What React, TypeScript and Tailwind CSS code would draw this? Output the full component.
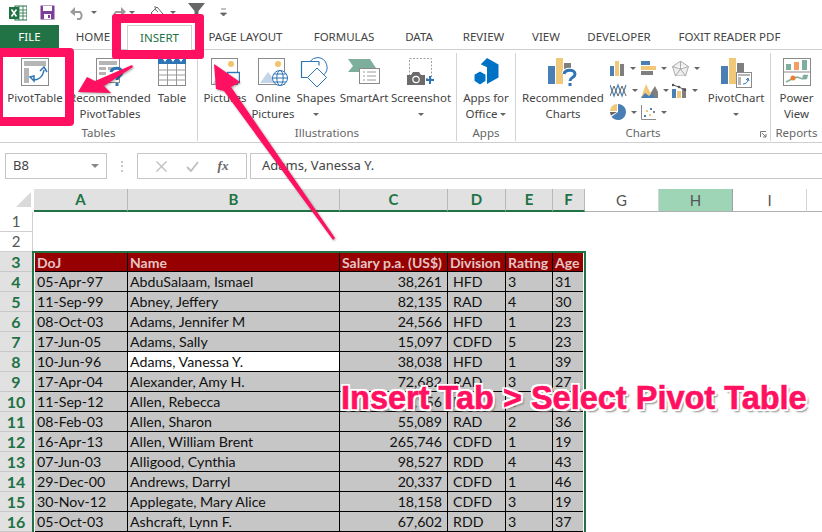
import React from "react";

const ribbonFont = "font-['Noto_Sans',sans-serif]";
const sheetFont = "font-['Lato',sans-serif]";

const tabs: [string, string][] = [
  ["HOME", "w-[68px]"],
  ["INSERT", "w-[65px]"],
  ["PAGE LAYOUT", "w-[107px]"],
  ["FORMULAS", "w-[90px]"],
  ["DATA", "w-[60px]"],
  ["REVIEW", "w-[69px]"],
  ["VIEW", "w-[56px]"],
  ["DEVELOPER", "w-[90px]"],
  ["FOXIT READER PDF", "w-[131px]"],
];

const rows = [
  ["05-Apr-97", "AbduSalaam, Ismael", "38,261", "HFD", "3", "31"],
  ["11-Sep-99", "Abney, Jeffery", "82,135", "RAD", "4", "30"],
  ["08-Oct-03", "Adams, Jennifer M", "24,566", "HFD", "1", "23"],
  ["17-Jun-05", "Adams, Sally", "15,097", "CDFD", "5", "23"],
  ["10-Jun-96", "Adams, Vanessa Y.", "38,038", "HFD", "1", "39"],
  ["17-Apr-04", "Alexander, Amy H.", "72,682", "RAD", "3", "27"],
  ["11-Sep-12", "Allen, Rebecca", "64,156", "RAD", "2", "33"],
  ["08-Feb-03", "Allen, Sharon", "55,089", "RAD", "2", "36"],
  ["16-Apr-13", "Allen, William Brent", "265,746", "CDFD", "1", "19"],
  ["07-Jun-03", "Alligood, Cynthia", "98,527", "RDD", "4", "43"],
  ["29-Dec-00", "Andrews, Darryl", "20,337", "CDFD", "1", "46"],
  ["30-Nov-12", "Applegate, Mary Alice", "18,158", "CDFD", "3", "19"],
  ["05-Oct-03", "Ashcraft, Lynn F.", "67,602", "RDD", "3", "37"],
];

const Caret = () => <span className="w-0 h-0 border-x-[3px] border-x-transparent border-t-[3px] border-t-[#666] inline-block" />;

const RibbonButton = ({ w, icon, lines, caret }: { w: string; icon: React.ReactNode; lines: string[]; caret?: boolean }) => (
  <div className={`${w} shrink-0 flex flex-col items-center`}>
    <div className="h-[36px] flex items-center justify-center">{icon}</div>
    {lines.map((l) => (
      <div key={l} className="leading-[16px] whitespace-nowrap">{l}</div>
    ))}
    {caret && <div className="h-[16px] flex items-center"><Caret /></div>}
  </div>
);

const Group = ({ w, label, children }: { w: string; label: string; children: React.ReactNode }) => (
  <div className={`${w} shrink-0 relative flex flex-col h-[88px] mt-[3px] border-r border-[#d4d4d4]`}>
    <div className="flex h-[73px] pt-[1px]">{children}</div>
    <div className="text-center leading-[16px] text-[#666]">{label}</div>
  </div>
);

const PivotIcon = () => (
  <svg width="30" height="30" viewBox="0 0 30 30">
    <rect x="1.5" y="1.5" width="27" height="27" fill="#fff" stroke="#8a8a8a" />
    <rect x="4" y="4" width="22" height="5" fill="#b5b5b5" />
    <rect x="4" y="11" width="5" height="15" fill="#b5b5b5" />
    <path d="M13 23c5 0 10-3 11-10" fill="none" stroke="#2e75b6" strokeWidth="1.5" />
    <path d="M20 14l4-4 3 5M10 20l4-1v5z" fill="none" stroke="#2e75b6" strokeWidth="1.5" />
  </svg>
);

const RecPivotIcon = () => (
  <svg width="30" height="30" viewBox="0 0 30 30">
    <rect x="1.5" y="1.5" width="23" height="24" fill="#fff" stroke="#8a8a8a" />
    <rect x="4" y="4" width="18" height="4" fill="#b5b5b5" />
    <rect x="4" y="10" width="7" height="3" fill="#b5b5b5" />
    <rect x="4" y="15" width="7" height="3" fill="#b5b5b5" />
    <rect x="13" y="10" width="7" height="3" fill="#b5b5b5" />
    <path d="M16 15c1-5 11-5 11 0 0 4-5 4-5 8M22 26v3" fill="none" stroke="#2e75b6" strokeWidth="3" />
  </svg>
);

const TableIcon = () => (
  <svg width="30" height="30" viewBox="0 0 30 30">
    <rect x="1.5" y="3.5" width="27" height="25" fill="#fff" stroke="#8a8a8a" />
    <rect x="1" y="1" width="28" height="6" fill="#2e75b6" />
    <path d="M1 13h28M1 18h28M1 23h28M10.5 7v21M19.5 7v21" stroke="#9a9a9a" />
    <path d="M6 2l2 3 2-3zM14 2l2 3 2-3zM22 2l2 3 2-3z" fill="#fff" />
  </svg>
);

const PicturesIcon = () => (
  <svg width="30" height="30" viewBox="0 0 30 30">
    <rect x="1.5" y="1.5" width="26" height="26" fill="#fff" stroke="#8a8a8a" />
    <circle cx="21" cy="7" r="3" fill="#f0c36d" />
    <path d="M3 26l9-11 7 8 0 4H3z" fill="#c5d5e8" />
    <rect x="17.5" y="15.5" width="12" height="10" fill="#fff" stroke="#2e75b6" strokeWidth="1.4" />
  </svg>
);

const OnlineIcon = () => (
  <svg width="32" height="30" viewBox="0 0 32 30">
    <rect x="1.5" y="1.5" width="26" height="26" fill="#fff" stroke="#8a8a8a" />
    <circle cx="21" cy="7" r="3" fill="#f0c36d" />
    <path d="M3 26l8-11 9 11z" fill="#c5d5e8" />
    <circle cx="23" cy="21" r="7.5" fill="#fff" stroke="#2e75b6" />
    <ellipse cx="23" cy="21" rx="3.2" ry="7.5" fill="none" stroke="#2e75b6" />
    <path d="M15.5 21h15M17 17h12M17 25h12" stroke="#2e75b6" />
  </svg>
);

const ShapesIcon = () => (
  <svg width="32" height="32" viewBox="0 0 32 32">
    <path d="M18 1.5a10 10 0 0 1 5 18" fill="none" stroke="#2e75b6" />
    <path d="M18 1.5a10 10 0 0 0-8 4" fill="none" stroke="#2e75b6" />
    <path d="M19 5.5H1.5v16h6" fill="none" stroke="#2e75b6" strokeWidth="1.2" />
    <path d="M19 5.5v4" stroke="#2e75b6" strokeWidth="1.2" />
    <path d="M17 12l9.5 9.5L17 31l-9.5-9.5z" fill="#fff" stroke="#2e75b6" />
  </svg>
);

const SmartArtIcon = () => (
  <svg width="32" height="28" viewBox="0 0 32 28">
    <path d="M0 1h22l6 9-4 4H0l5-6z" fill="#7daf9c" />
    <rect x="11.5" y="10.5" width="20" height="15" fill="#fff" stroke="#8a8a8a" />
    <path d="M15 14h2M19 14h9M15 18h2M19 18h9M15 22h2M19 22h9" stroke="#9a9a9a" />
  </svg>
);

const ScreenshotIcon = () => (
  <svg width="30" height="30" viewBox="0 0 30 30">
    <rect x="3.5" y="1.5" width="22" height="20" fill="none" stroke="#a0a0a0" strokeDasharray="2 1.5" />
    <path d="M1 18h4l2-3h6l2 3h4v10H1z" fill="#6b6b6b" />
    <circle cx="10" cy="22.5" r="3.2" fill="#6b6b6b" stroke="#fff" strokeWidth="1.2" />
    <path d="M24 19v8M20 23h8" stroke="#2e75b6" strokeWidth="2" />
  </svg>
);

const AppsIcon = () => (
  <svg width="28" height="30" viewBox="0 0 28 30">
    <path d="M15 1l11.5 6.5v13L15 27V10L9 7z" fill="#0072c6" />
    <path d="M9 7.5L15 4l6 4v14h-6V10z" fill="#0072c6" />
    <path d="M8 14l6 3.5v6.5L8 28l-6-4v-6.500z" fill="#0072c6" stroke="#fff" />
  </svg>
);

const RecChartsIcon = () => (
  <svg width="30" height="30" viewBox="0 0 30 30">
    <rect x="0" y="9" width="7" height="18" fill="#4a7fb5" />
    <rect x="8" y="1" width="7" height="26" fill="#f0c878" />
    <rect x="16" y="6" width="7" height="6" fill="#7f7f7f" />
    <path d="M16 17c1-5 11-5 11 0 0 4-5 3-5 7M22 26v3" fill="none" stroke="#fff" strokeWidth="5" />
    <path d="M16 17c1-5 11-5 11 0 0 4-5 3-5 7M22 26v3" fill="none" stroke="#2e75b6" strokeWidth="3" />
  </svg>
);

const PivotChartIcon = () => (
  <svg width="32" height="32" viewBox="0 0 32 32">
    <rect x="1" y="10" width="7" height="18" fill="#4a7fb5" />
    <rect x="9" y="2" width="7" height="26" fill="#f0c878" />
    <rect x="17" y="7" width="7" height="10" fill="#7f7f7f" />
    <rect x="16.5" y="16.5" width="15" height="15" fill="#fff" stroke="#8a8a8a" />
    <rect x="18" y="18" width="12" height="2" fill="#b5b5b5" />
    <rect x="18" y="21" width="3" height="8" fill="#b5b5b5" />
    <path d="M23 28c3 0 5-2 5-5M26 24l2-2 1 3" fill="none" stroke="#2e75b6" />
  </svg>
);

const PowerViewIcon = () => (
  <svg width="28" height="28" viewBox="0 0 28 28">
    <rect x="0.5" y="0.5" width="27" height="27" fill="#fff" stroke="#8a8a8a" />
    <path d="M0 14h28" stroke="#8a8a8a" />
    <rect x="3" y="6" width="5" height="6" fill="#7daf9c" />
    <rect x="11" y="4" width="5" height="8" fill="#ed7d31" opacity="0.75" />
    <rect x="19" y="2" width="5" height="10" fill="#7daf9c" />
    <path d="M3 24l6-3 5-2 6 2 5-4" fill="none" stroke="#7daf9c" strokeWidth="1.5" />
    <circle cx="10" cy="20" r="2.5" fill="#ed7d31" />
    <circle cx="22" cy="19" r="2.5" fill="#7daf9c" />
  </svg>
);

const miniCharts = [
  <svg key="bar" width="15" height="15" viewBox="0 0 15 15"><rect x="0" y="5" width="4" height="10" fill="#4a7fb5" /><rect x="5" y="0" width="4" height="15" fill="#f0c878" /><rect x="10" y="3" width="4" height="12" fill="#7f7f7f" /></svg>,
  <svg key="hbar" width="15" height="15" viewBox="0 0 15 15"><rect x="0" y="0" width="9" height="4" fill="#4a7fb5" /><rect x="0" y="5" width="15" height="4" fill="#f0c878" /><rect x="0" y="10" width="12" height="4" fill="#7f7f7f" /></svg>,
  <svg key="radar" width="17" height="15" viewBox="0 0 17 15"><path d="M8.500 0l8 5.500-3 9.500h-10l-3-9.500zM8.500 0v8M.5 5.500l8 2.500 8-2.500M3.500 15l5-7 5 7" fill="#eee" stroke="#999" strokeWidth=".8" /></svg>,
  <svg key="line" width="17" height="15" viewBox="0 0 17 15"><path d="M0 2l4 11 4-11 4 11 4-11" fill="none" stroke="#4a7fb5" strokeWidth="1.200" /><path d="M0 13l4-10 4 10 4-10 4 10" fill="none" stroke="#666" /></svg>,
  <svg key="area" width="17" height="15" viewBox="0 0 17 15"><path d="M0 15l5-8 4 4 5-8 3 6v6z" fill="#7f7f7f" /><path d="M0 15l5-14 5 10v4z" fill="#f0c878" /><path d="M0 15l4-5 4 3 3-3 3 5z" fill="#4a7fb5" /></svg>,
  <svg key="combo" width="15" height="15" viewBox="0 0 15 15"><rect x="0" y="6" width="4" height="9" fill="#4a7fb5" /><rect x="5" y="8" width="4" height="7" fill="#f0c878" /><rect x="10" y="5" width="4" height="10" fill="#7f7f7f" /><path d="M1 2l6 2 6 3" fill="none" stroke="#555" /><circle cx="1" cy="2" r="1.300" fill="#555" /><circle cx="7" cy="4" r="1.300" fill="#555" /><circle cx="13" cy="7" r="1.300" fill="#555" /></svg>,
  <svg key="pie" width="16" height="16" viewBox="0 0 16 16"><path d="M8 8L8 0a8 8 0 1 1-6.500 12.700z" fill="#4a7fb5" /><path d="M7 7V0A7 7 0 0 0 0 7z" fill="#f0c878" /><path d="M7 8H0a7 7 0 0 0 1 3.500z" fill="#666" /></svg>,
  <svg key="scatter" width="15" height="15" viewBox="0 0 15 15"><path d="M.5 0v14.500H15" fill="none" stroke="#8a8a8a" /><rect x="3" y="10" width="2" height="2" fill="#4a7fb5" /><rect x="5" y="5" width="2" height="2" fill="#f0c878" /><rect x="8" y="9" width="2" height="2" fill="#f0c878" /><rect x="9" y="3" width="2" height="2" fill="#4a7fb5" /><rect x="12" y="6" width="2" height="2" fill="#7f7f7f" /></svg>,
];

const cols = ["w-[93px]", "w-[212px]", "w-[108px]", "w-[58px]", "w-[47px]", "w-[30px]"];
const heads = ["DoJ", "Name", "Salary p.a. (US$)", "Division", "Rating", "Age"];

const App = () => {
  return (
    <div className={`relative w-[822px] h-[532px] overflow-hidden bg-white text-[11.5px] text-[#444] ${ribbonFont}`}>
      {/* quick access */}
      <div className="h-[25px] flex items-center">
        <svg className="ml-[9px]" width="18" height="16" viewBox="0 0 18 16">
          <rect x="6" y="1" width="12" height="14" fill="#fff" stroke="#1f7244" />
          <path d="M10 1v14M14 1v14M6 5h12M6 8h12M6 11h12" stroke="#1f7244" strokeWidth=".8" />
          <rect x="0" y="2" width="10" height="12" fill="#1f7244" />
          <path d="M2.500 4.500l5 7M7.500 4.500l-5 7" stroke="#fff" strokeWidth="1.600" />
        </svg>
        <svg className="ml-[13px]" width="15" height="15" viewBox="0 0 15 15">
          <rect x="0.500" y="0.500" width="14" height="14" fill="#7e3f98" />
          <rect x="3" y="1" width="9" height="5" fill="#fff" />
          <rect x="4" y="9" width="7" height="5" fill="#fff" />
          <rect x="8" y="10" width="2" height="3" fill="#7e3f98" />
        </svg>
        <svg className="ml-[15px]" width="16" height="14" viewBox="0 0 16 14">
          <path d="M4 6h6a4.500 4.500 0 0 1 0 7H7" fill="none" stroke="#9a9a9a" strokeWidth="2" />
          <path d="M0 6l5-5v9z" fill="#9a9a9a" />
        </svg>
        <span className="ml-[5px] flex"><Caret /></span>
        <svg className="ml-[13px]" width="16" height="14" viewBox="0 0 16 14">
          <path d="M12 6H6a4.500 4.500 0 0 0 0 7h3" fill="none" stroke="#9a9a9a" strokeWidth="2" />
          <path d="M16 6l-5-5v9z" fill="#9a9a9a" />
        </svg>
        <span className="ml-[3px] flex"><Caret /></span>
        <svg className="ml-[15px]" width="16" height="16" viewBox="0 0 16 16">
          <path d="M1 8l6-6 6 7-5 5z" fill="#fff" stroke="#666" />
          <path d="M5 1c0 3 1 5 3 6" fill="none" stroke="#666" />
          <path d="M14 10c1 2 2 3 0 4-2-1-1-2 0-4z" fill="#666" />
        </svg>
        <span className="ml-[4px] flex"><Caret /></span>
        <svg className="ml-[12px] -mt-[6px]" width="17" height="14" viewBox="0 0 17 14">
          <path d="M0 0h17l-6.500 8v6h-4V8z" fill="#666" />
        </svg>
        <svg className="ml-[14px]" width="9" height="9" viewBox="0 0 9 9">
          <path d="M2 1h5M1.500 5h6l-3 3z" fill="#666" stroke="#666" strokeWidth=".8" />
        </svg>
      </div>

      {/* tabs */}
      <div className="h-[25px] flex border-b border-[#cfcfcf]">
        <div className="w-[59px] h-[24px] bg-[#217346] text-white flex items-center justify-center">FILE</div>
        {tabs.map(([t, w]) =>
          t === "INSERT" ? (
            <div key={t} className={`${w} h-[25px] bg-white border-x border-t border-[#cfcfcf] text-[#217346] flex items-center justify-center`}>{t}</div>
          ) : (
            <div key={t} className={`${w} flex items-center justify-center whitespace-nowrap`}>{t}</div>
          ),
        )}
      </div>

      {/* ribbon */}
      <div className="h-[93px] flex border-b border-[#cfcfcf]">
        <Group w="w-[198px]" label="Tables">
          <RibbonButton w="w-[70px]" icon={<PivotIcon />} lines={["PivotTable"]} />
          <RibbonButton w="w-[80px]" icon={<RecPivotIcon />} lines={["Recommended", "PivotTables"]} />
          <RibbonButton w="w-[44px]" icon={<TableIcon />} lines={["Table"]} />
        </Group>
        <Group w="w-[259px]" label="Illustrations">
          <RibbonButton w="w-[54px]" icon={<PicturesIcon />} lines={["Pictures"]} />
          <RibbonButton w="w-[42px]" icon={<OnlineIcon />} lines={["Online", "Pictures"]} />
          <RibbonButton w="w-[44px]" icon={<ShapesIcon />} lines={["Shapes"]} caret />
          <RibbonButton w="w-[52px]" icon={<SmartArtIcon />} lines={["SmartArt"]} />
          <RibbonButton w="w-[62px]" icon={<ScreenshotIcon />} lines={["Screenshot"]} caret />
        </Group>
        <Group w="w-[59px]" label="Apps">
          <div className="w-[58px] flex flex-col items-center">
            <div className="h-[36px] flex items-center"><AppsIcon /></div>
            <div className="leading-[16px]">Apps for</div>
            <div className="leading-[16px] flex items-center gap-[3px]">Office <Caret /></div>
          </div>
        </Group>
        <Group w="w-[255px]" label="Charts">
          <RibbonButton w="w-[94px]" icon={<RecChartsIcon />} lines={["Recommended", "Charts"]} />
          <div className="w-[93px] shrink-0 grid grid-cols-3 auto-rows-[22px] pt-[3px]">
            {miniCharts.map((c, i) => (
              <div key={i} className="flex items-center gap-[5px]">{c}<Caret /></div>
            ))}
          </div>
          <RibbonButton w="w-[66px]" icon={<PivotChartIcon />} lines={["PivotChart"]} caret />
          <svg className="absolute right-[3px] bottom-[3px]" width="7" height="7" viewBox="0 0 7 7">
            <path d="M.5 6V.5H6" fill="none" stroke="#777" />
            <path d="M2 2l4 4M6 3v3H3" fill="none" stroke="#777" />
          </svg>
        </Group>
        <div className="w-[51px] shrink-0 flex flex-col h-[88px] mt-[3px]">
          <div className="flex h-[73px] pt-[1px]">
            <RibbonButton w="w-[51px]" icon={<PowerViewIcon />} lines={["Power", "View"]} />
          </div>
          <div className="text-center leading-[16px] text-[#666]">Reports</div>
        </div>
      </div>

      {/* formula bar */}
      <div className="h-[46px] flex items-center">
        <div className="ml-[5px] w-[102px] h-[26px] border border-[#c6c6c6] flex items-center justify-between px-[7px] text-[13px]">
          B8
          <span className="w-0 h-0 border-x-[4px] border-x-transparent border-t-[4px] border-t-[#888]" />
        </div>
        <div className="w-[30px] flex justify-center text-[#aaa] leading-none tracking-tight">⋮</div>
        <div className="w-[110px] h-[26px] border border-[#c6c6c6] flex items-center justify-around px-[8px]">
          <svg width="11" height="11" viewBox="0 0 11 11"><path d="M.5.5l10 10M10.500.5l-10 10" stroke="#c2c2c2" strokeWidth="1.500" /></svg>
          <svg width="13" height="11" viewBox="0 0 13 11"><path d="M1 6l4 4 7-9" fill="none" stroke="#c2c2c2" strokeWidth="2" /></svg>
          <span className="font-['Liberation_Serif',serif] italic font-bold text-[13px] text-[#666]">fx</span>
        </div>
        <div className="ml-[3px] flex-1 h-[26px] border-y border-l border-[#c6c6c6] flex items-center pl-[11px] text-[13px]">Adams, Vanessa Y.</div>
      </div>

      {/* sheet */}
      <div className={sheetFont}>
        <div className="h-[23px] flex">
          <div className="w-[34px] relative">
            <span className="absolute right-[3px] bottom-[5px] w-0 h-0 border-l-[15px] border-l-transparent border-b-[15px] border-b-[#d9d9d9]" />
          </div>
          {["A", "B", "C", "D", "E", "F"].map((c, i) => (
            <div key={c} className={`${["w-[94px]", "w-[212px]", "w-[108px]", "w-[58px]", "w-[47px]", "w-[32px]"][i]} bg-[#e1e1e1] border-r border-[#b8b8b8] border-b-2 border-b-[#217346] flex items-center justify-center text-[#217346] font-bold text-[15px]`}>{c}</div>
          ))}
          {["G", "H", "I"].map((c) => (
            <div key={c} className={`w-[74px] border-r border-[#d4d4d4] border-b border-b-[#b0b0b0] flex items-center justify-center text-[15px] text-[#555] ${c === "H" ? "bg-[#9fd5b7] border-x-[#a0a0a0]" : ""}`}>{c}</div>
          ))}
          <div className="flex-1 border-b border-[#b0b0b0]" />
        </div>

        {[1, 2].map((n) => (
          <div key={n} className="h-[20px] flex">
            <div className="w-[33px] border-r border-b border-[#d0d0d0] flex items-center justify-center text-[15px] text-[#555]">{n}</div>
          </div>
        ))}

        <div className="flex">
          <div className="w-[32px] shrink-0">
            {rows.concat([heads]).map((_, i) => (
              <div key={i} className="h-[20px] bg-[#e1e1e1] border-b border-[#c8c8c8] flex items-center justify-center text-[16px] font-bold text-[#217346]">{i + 3}</div>
            ))}
          </div>
          <div className="-mt-px w-[554px] shrink-0 border-2 border-[#217346] border-b-0 px-px bg-white h-[281px] overflow-hidden">
            <div className="flex h-[19px] bg-[#960000] border-b border-black text-[#e4c4c4] font-bold text-[14px]">
              {heads.map((h, i) => (
                <div key={h} className={`${cols[i]} ${i < 5 ? "border-r border-black" : ""} pl-[2px] flex items-center whitespace-nowrap`}>{h}</div>
              ))}
            </div>
            {rows.map((r, ri) => (
              <div key={ri} className="flex h-[20px] bg-[#c6c6c6] border-b border-black text-[14.2px] text-[#111]">
                {r.map((v, i) => (
                  <div
                    key={i}
                    className={`${cols[i]} ${i < 5 ? "border-r border-black" : ""} flex items-center whitespace-nowrap ${i === 2 ? "justify-end pr-[5px]" : i === 3 ? "pl-[5px]" : "pl-[2px]"} ${ri === 4 && i === 1 ? "bg-white" : ""}`}
                  >
                    {v}
                  </div>
                ))}
              </div>
            ))}
          </div>
        </div>
      </div>

      {/* annotations */}
      <div className="absolute left-[112px] top-[14px] w-[92px] h-[45px] border-[9px] border-[#ff1060] rounded-[3px]" />
      <div className="absolute -left-[6px] top-[48px] w-[80px] h-[78px] border-[9px] border-[#ff1060] rounded-[4px]" />
      <svg className="absolute left-0 top-0 drop-shadow-[1px_1px_1px_rgba(0,0,0,0.35)]" width="340" height="250" viewBox="0 0 340 250">
        <path d="M78 92L87 77L95 81L132 65L133 67L104 86L111 93Z" fill="#ff1060" />
        <path d="M214 64L240 82L231 87L335 238L333 240L224 91L216 89Z" fill="#ff1060" />
      </svg>
      <div className="absolute left-[341px] top-[379px] whitespace-nowrap font-['Liberation_Sans',sans-serif] font-bold text-[32.5px] leading-[38px] text-[#ff1060] [-webkit-text-stroke:0.6px_#ff1060] [text-shadow:2px_0_0_#fff,-2px_0_0_#fff,0_2px_0_#fff,0_-2px_0_#fff,2px_2px_0_#fff,-2px_-2px_0_#fff,2px_-2px_0_#fff,-2px_2px_0_#fff,3px_3px_2px_#888]">
        Insert Tab &gt; Select Pivot Table
      </div>
    </div>
  );
};

export default App;
